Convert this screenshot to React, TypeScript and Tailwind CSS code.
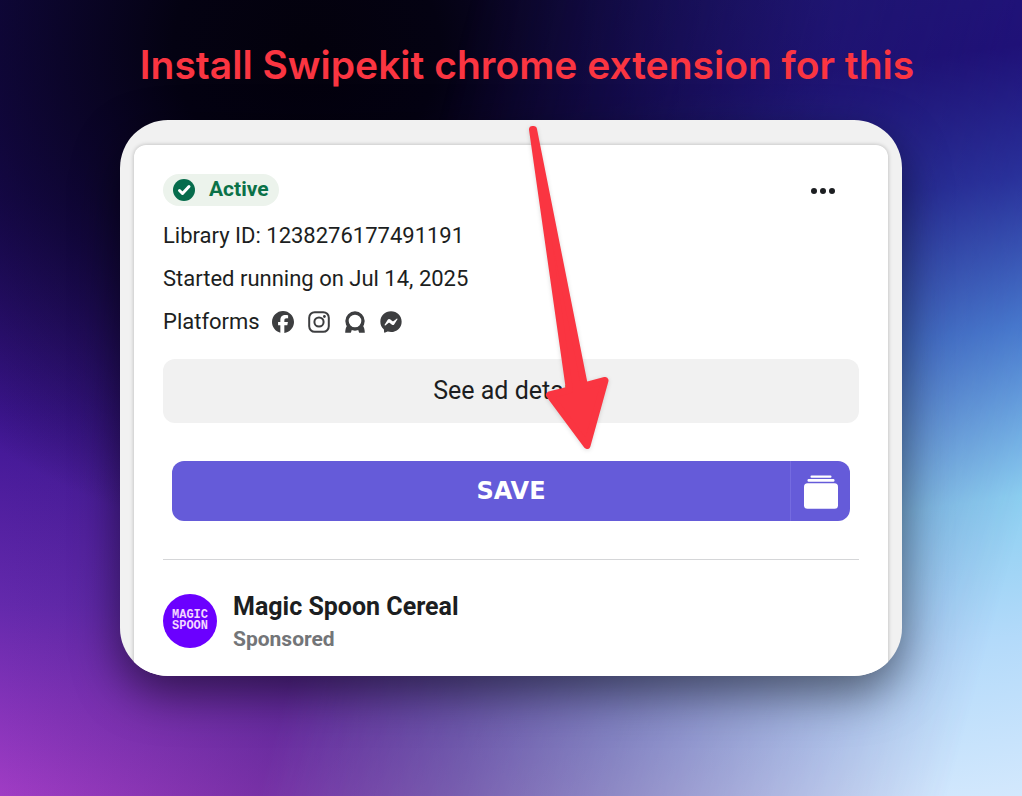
import { FaFacebook, FaFacebookMessenger } from "react-icons/fa6";

const details = [
  "Library ID: 1238276177491191",
  "Started running on Jul 14, 2025",
];

function CheckIcon() {
  return (
    <svg
      width="22"
      height="22"
      viewBox="0 0 22 22"
      fill="none"
      stroke="currentColor"
      strokeWidth="3"
      strokeLinecap="round"
      strokeLinejoin="round"
      aria-hidden
    >
      <path d="m6.5 11.5 3 3 6.5-7" />
    </svg>
  );
}

function InstagramIcon() {
  return (
    <svg width="22" height="22" viewBox="0 0 22 22" fill="none" aria-label="Instagram" role="img">
      <rect x="1.2" y="1.2" width="19.6" height="19.6" rx="5.5" stroke="currentColor" strokeWidth="2" />
      <circle cx="11" cy="11" r="4.6" stroke="currentColor" strokeWidth="2" />
      <circle cx="16.4" cy="5.5" r="1.4" fill="currentColor" />
    </svg>
  );
}

function AudienceNetworkIcon() {
  return (
    <svg width="22" height="22" viewBox="0 0 22 22" fill="none" aria-label="Audience Network" role="img">
      <circle cx="11" cy="10" r="8" stroke="currentColor" strokeWidth="3.4" />
      <path
        d="M3.2 14.5 8 17.4C7.8 19 7.4 20.6 6.8 21.8H1.2C1.2 18.8 1.8 16.4 3.2 14.5ZM18.8 14.5 14 17.4C14.2 19 14.6 20.6 15.2 21.8H20.8C20.8 18.8 20.2 16.4 18.8 14.5Z"
        fill="currentColor"
      />
    </svg>
  );
}

function CollectionIcon() {
  return (
    <svg width="34" height="34" viewBox="0 0 34 34" fill="currentColor" aria-hidden>
      <rect x="6.5" y="0.5" width="21" height="2.2" rx="1" />
      <rect x="3.5" y="4" width="27" height="2.8" rx="1.2" />
      <rect x="0" y="8.2" width="34" height="25.5" rx="3.5" />
    </svg>
  );
}

function Arrow() {
  return (
    <svg
      className="pointer-events-none absolute top-0 left-1/2 drop-shadow-sm"
      width="110"
      height="340"
      viewBox="0 0 110 340"
      fill="#fa3541"
      stroke="#fa3541"
      strokeLinejoin="round"
      aria-hidden
    >
      <path
        strokeWidth="7"
        d="M21.5 9.5H22.5L73.5 266 94 260.5 76 325.5 38.5 275 58.5 270Z"
      />
    </svg>
  );
}

function AdCard() {
  return (
    <article className="mx-3.5 rounded-t-xl bg-white px-[29px] pt-[29px] pb-[18px] shadow-[0_0_4px_rgba(0,0,0,0.25)]">
      <div className="flex items-center justify-between">
        <span className="flex h-8 items-center gap-3.5 rounded-full bg-[#ecf3ec] px-2.5 text-[21px] font-bold text-[#0a7148]">
          <span className="rounded-full bg-[#066c4c] text-white">
            <CheckIcon />
          </span>
          Active
        </span>
        <button type="button" aria-label="More options" className="mr-6 flex gap-[3px] pt-0.5">
          <span className="size-1.5 rounded-full bg-[#1c1e21]" />
          <span className="size-1.5 rounded-full bg-[#1c1e21]" />
          <span className="size-1.5 rounded-full bg-[#1c1e21]" />
        </button>
      </div>

      <div className="mt-2 text-[22px] leading-[43px]">
        {details.map((line) => (
          <p key={line}>{line}</p>
        ))}
        <div className="flex items-center">
          <span>Platforms</span>
          <span className="ml-3 flex gap-3.5 text-[#3d3e40]">
            <FaFacebook size={22} title="Facebook" />
            <InstagramIcon />
            <AudienceNetworkIcon />
            <FaFacebookMessenger size={22} title="Messenger" />
          </span>
        </div>
      </div>

      <button type="button" className="mt-4 h-16 w-full rounded-xl bg-[#f1f1f1] text-[25px]">
        See ad details
      </button>

      <div className="mx-[9px] mt-[38px] flex h-[60px] overflow-hidden rounded-xl bg-[#655bd9] text-white">
        <button
          type="button"
          className="flex-1 pl-[60px] font-['DejaVu_Sans',sans-serif] text-2xl font-bold"
        >
          SAVE
        </button>
        <button
          type="button"
          aria-label="Choose collection"
          className="flex w-[60px] items-center justify-center border-l border-[#756be0] pt-0.5"
        >
          <CollectionIcon />
        </button>
      </div>

      <hr className="mt-[38px] border-[#d5d6d8]" />

      <div className="mt-[34px] flex gap-4">
        <div className="flex size-[54px] flex-col items-center justify-center rounded-full bg-[#6b00ff] font-['Liberation_Mono',monospace] text-xs leading-[11px] font-bold text-[#f3d5ff]">
          <span>MAGIC</span>
          <span>SPOON</span>
        </div>
        <div>
          <p className="text-[25px] leading-[26px] font-bold">Magic Spoon Cereal</p>
          <p className="text-[21px] leading-[38px] font-bold text-[#737578]">Sponsored</p>
        </div>
      </div>
    </article>
  );
}

function Backdrop() {
  return (
    <div className="absolute inset-0" aria-hidden>
      <div className="absolute inset-0 bg-[linear-gradient(180deg,#1b0e62_0%,#240e72_25%,#3f1694_52%,#6429ac_76%,#a03cc4_100%)]" />
      {/* Cools the purple down away from the left edge */}
      <div className="absolute inset-0 bg-[linear-gradient(90deg,transparent_0%,#2a1a6c99_45%,#1c1c6499_60%)]" />
      {/* Night sky spot behind the headline */}
      <div className="absolute inset-0 bg-[radial-gradient(ellipse_52%_62%_at_30%_6%,#03010c_0%,#040212_25%,#080322b3_58%,transparent_100%)]" />
      <div className="absolute inset-0 bg-[linear-gradient(172deg,#241880_0%,#20107c_20%,#2b35a2_34%,#4a80d4_50%,#8ccff1_68%,#b3dafa_83%,#d3e8fd_100%)] mask-[linear-gradient(105deg,transparent_38%,rgba(0,0,0,0.4)_60%,black_94%)]" />
    </div>
  );
}

export default function App() {
  return (
    <main className="relative min-h-screen px-[120px] pb-[120px] font-[Roboto,sans-serif] text-[#1c1e21]">
      <Backdrop />
      <h1 className="relative -mr-8 flex h-[120px] items-center justify-center pt-2.5 text-center font-[Inter,sans-serif] text-[39px] font-semibold whitespace-nowrap text-[#fa3541]">
        Install Swipekit chrome extension for this
      </h1>
      <div className="relative">
        <section className="overflow-hidden rounded-[48px] bg-[#f1f1f1] pt-[25px] shadow-[0_18px_45px_rgba(0,0,0,0.5)]">
          <AdCard />
        </section>
        <Arrow />
      </div>
    </main>
  );
}
